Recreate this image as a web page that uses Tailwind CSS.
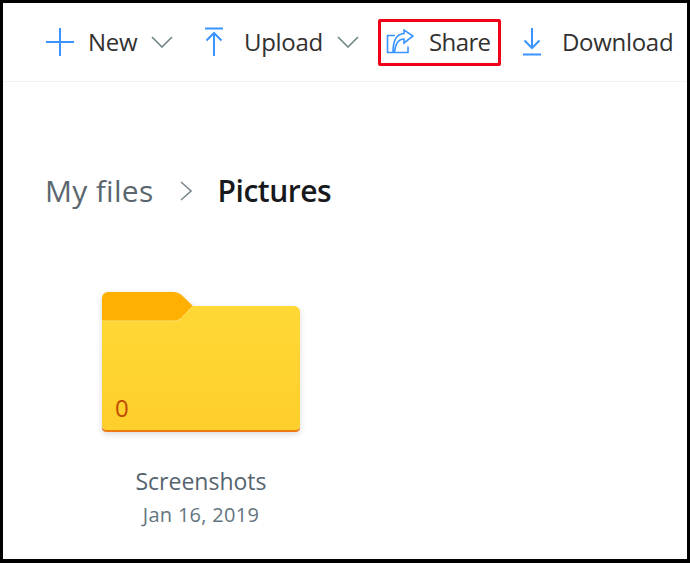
<!DOCTYPE html>
<html>
<head>
<meta charset="utf-8">
<script src="https://cdn.jsdelivr.net/npm/@tailwindcss/browser@4"></script>
</head>
<body class="bg-black">
<div class="w-[690px] h-[563px] overflow-hidden border-t-[3px] border-l-[3px] border-r-[3px] border-b-[4px] border-black bg-white font-['Open_Sans','Noto_Sans',sans-serif] text-[#323130]">
  <div class="h-[79px] border-b border-[#f3f2f1] flex items-center pl-[42px] whitespace-nowrap text-[24px] leading-none tracking-[-0.3px]">
    <div class="flex items-center">
      <svg class="w-[30px] h-[30px]" viewBox="0 0 30 30" fill="none" stroke="#3b93ff" stroke-width="2"><path d="M15 1V29M1 15H29"/></svg>
      <span class="ml-[13px] w-[50px]">New</span>
      <svg class="ml-[13px] w-[22px] h-[12px]" viewBox="0 0 22 12" fill="none" stroke="#6f8587" stroke-width="1.6"><path d="M1 1L11 11L21 1"/></svg>
    </div>
    <div class="flex items-center ml-[32px]">
      <svg class="w-[18px] h-[30px]" viewBox="0 0 18 30" fill="none" stroke="#3b93ff" stroke-width="2"><path d="M0 1.5H18M9 29V6M1.5 13.5L9 6L16.500 13.500"/></svg>
      <span class="ml-[21px] w-[79px]">Upload</span>
      <svg class="ml-[14px] w-[22px] h-[12px]" viewBox="0 0 22 12" fill="none" stroke="#6f8587" stroke-width="1.6"><path d="M1 1L11 11L21 1"/></svg>
    </div>
    <div class="flex items-center ml-[19px] w-[123px] h-[47px] border-[3px] border-[#f00018] rounded-[2px] pl-[5px]">
      <svg class="w-[28px] h-[26px]" viewBox="0 0 28 26" fill="none" stroke="#3b93ff" stroke-width="1.600"><path d="M9 6.500H1.500V23.500H22V17.500M7 23C7 11 11 5 18 4.500V1L27 7L18 14V10C13 10 9.500 14 8.500 23"/></svg>
      <span class="ml-[15px] tracking-[-0.6px]">Share</span>
    </div>
    <div class="flex items-center ml-[22px]">
      <svg class="w-[18px] h-[28px]" viewBox="0 0 18 28" fill="none" stroke="#3b93ff" stroke-width="2"><path d="M9 0V20M1.500 12.500L9 20L16.500 12.500M0 26.500H18"/></svg>
      <span class="ml-[21px]">Download</span>
    </div>
  </div>
  <div class="flex items-center pl-[42px] mt-[89px] h-[40px] text-[30px] leading-none">
    <span class="text-[#5b6770] tracking-[0.3px]">My files</span>
    <svg class="ml-[26px] w-[12px] h-[20px]" viewBox="0 0 12 20" fill="none" stroke="#7d8a90" stroke-width="1.600"><path d="M1 1L11 10L1 19"/></svg>
    <span class="ml-[26px] font-semibold text-[#17191c] tracking-[-0.5px]">Pictures</span>
  </div>
  <div class="w-[198px] ml-[99px] mt-[81px] flex flex-col items-center">
    <div class="relative w-[198px] h-[141px]">
      <svg class="w-[198px] h-[141px] drop-shadow-[0_2px_3px_rgba(0,0,0,0.15)]" viewBox="0 0 198 141" fill="none">
        <defs><linearGradient id="f" x1="0" y1="0" x2="0" y2="1"><stop offset="0" stop-color="#ffd835"/><stop offset="1" stop-color="#ffcf2b"/></linearGradient></defs>
        <path d="M0 6A6 6 0 0 1 6 0H72Q76 0 79 2.500L91 14V30H0Z" fill="#ffb000"/>
        <path d="M0 29H72Q76 29 79 26.500L91 14H192A6 6 0 0 1 198 20V133A6 6 0 0 1 192 139H6A6 6 0 0 1 0 133Z" fill="url(#f)"/>
        <path d="M0 29H72Q76 29 79 26.500L91 14" stroke="#ffe16a" stroke-width="1"/>
        <path d="M0 134Q0 138 5 138H193Q198 138 198 134V136Q198 140 193 140H5Q0 140 0 136Z" fill="#ef7a12"/>
      </svg>
      <span class="absolute left-[13px] top-[104px] text-[24px] leading-none text-[#c24a00]">0</span>
    </div>
    <div class="mt-[34px] text-[23px] leading-[28px] text-[#566470]">Screenshots</div>
    <div class="mt-[7px] text-[20px] leading-[26px] tracking-[0.3px] text-[#64757f]">Jan 16, 2019</div>
  </div>
</div>
</body>
</html>
